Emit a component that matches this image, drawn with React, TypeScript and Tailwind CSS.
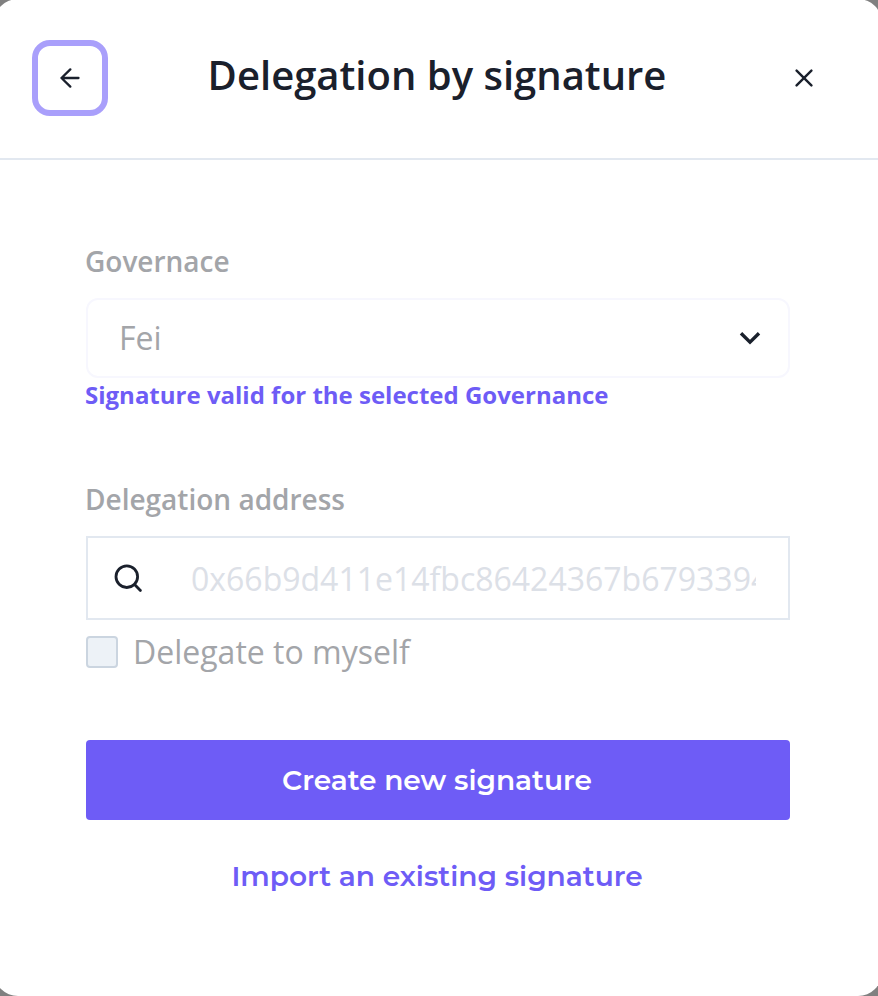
export default function App() {
  return (
    <div className="h-[996px] w-[878px] overflow-hidden bg-[#808080] font-['Open_Sans',sans-serif]">
      <main className="-mt-px -ml-[6px] flex h-[997px] w-[888px] flex-col rounded-[24px] bg-white pt-px">
        <header className="flex h-40 shrink-0 items-start justify-between border-b-2 border-[#e2e8f0] pr-9 pl-[38px] pt-10">
          <button aria-label="Back" className="flex size-[76px] items-center justify-center rounded-[18px] border-[6px] border-[#a99ffb]">
            <svg width="20" height="20" viewBox="0 0 20 20" fill="none" stroke="#1a202c" strokeWidth="2.3" strokeLinecap="round" strokeLinejoin="round">
              <path d="M18.5 10H1.5M10.3 1.4 1.5 10l8.8 8.6" />
            </svg>
          </button>
          <h1 className="ml-1 pt-[5px] text-[40px] leading-[60px] font-semibold whitespace-nowrap text-[#1a202c]">Delegation by signature</h1>
          <button aria-label="Close" className="flex h-[76px] w-[84px] items-center justify-center">
            <svg width="18" height="18" viewBox="0 0 18 18" fill="none" stroke="#1a202c" strokeWidth="2.4" strokeLinecap="round">
              <path d="m1.6 1.6 14.8 14.8M16.4 1.6 1.6 16.4" />
            </svg>
          </button>
        </header>
        <form className="flex flex-col pt-[81px] pr-[92px] pl-[92px]">
          <label className="-ml-px h-[57px] text-[28px] leading-10 font-semibold text-[#a3a5a9]">Governace</label>
          <div className="flex h-20 items-center justify-between rounded-xl border-2 border-[#f7f7fe] pr-[27px] pl-[31px] text-[32px] text-[#a3a5a9]">
            <span>Fei</span>
            <svg width="22" height="14" viewBox="0 0 22 14" fill="none" stroke="#1a202c" strokeWidth="3.4"><path d="m2 2.2 9 9 9-9" /></svg>
          </div>
          <p className="-mt-px -ml-px h-[102px] text-2xl leading-9 font-bold text-[#6e5cf6]">Signature valid for the selected Governance</p>
          <label className="-ml-px h-[57px] text-[28px] leading-10 font-semibold text-[#a3a5a9]">Delegation address</label>
          <div className="flex h-[84px] items-center border-2 border-[#e2e8f0] pr-8 pl-[26px]">
            <svg className="shrink-0" width="30" height="30" viewBox="0 0 30 30" fill="none" stroke="#1a202c" strokeWidth="2.8" strokeLinecap="round"><circle cx="12.8" cy="13.7" r="10.8" /><path d="m20.6 21.6 5.8 5.8" /></svg>
            <input
              type="text"
              className="ml-[47px] h-full min-w-0 flex-1 bg-transparent text-[32px] text-[#1a202c] outline-none placeholder:text-[#dce0e7]"
              placeholder="0x66b9d411e14fbc86424367b67933945"
            />
          </div>
          <label className="mt-[11px] flex h-[42px] items-center gap-[15px] text-[32px] text-[#a3a5a9]">
            <span className="size-8 rounded border-2 border-[#cbd5e0] bg-[#edf2f7]" />
            Delegate to myself
          </label>
          <button type="button" className="mt-[67px] h-20 rounded bg-[#6e5cf6] pr-0.5 font-[Montserrat,'Open_Sans',sans-serif] text-[28px] font-semibold text-white">Create new signature</button>
          <button type="button" className="mt-4 h-20 pr-0.5 font-[Montserrat,'Open_Sans',sans-serif] text-[28px] font-semibold text-[#6e5cf6]">Import an existing signature</button>
        </form>
      </main>
    </div>
  );
}
